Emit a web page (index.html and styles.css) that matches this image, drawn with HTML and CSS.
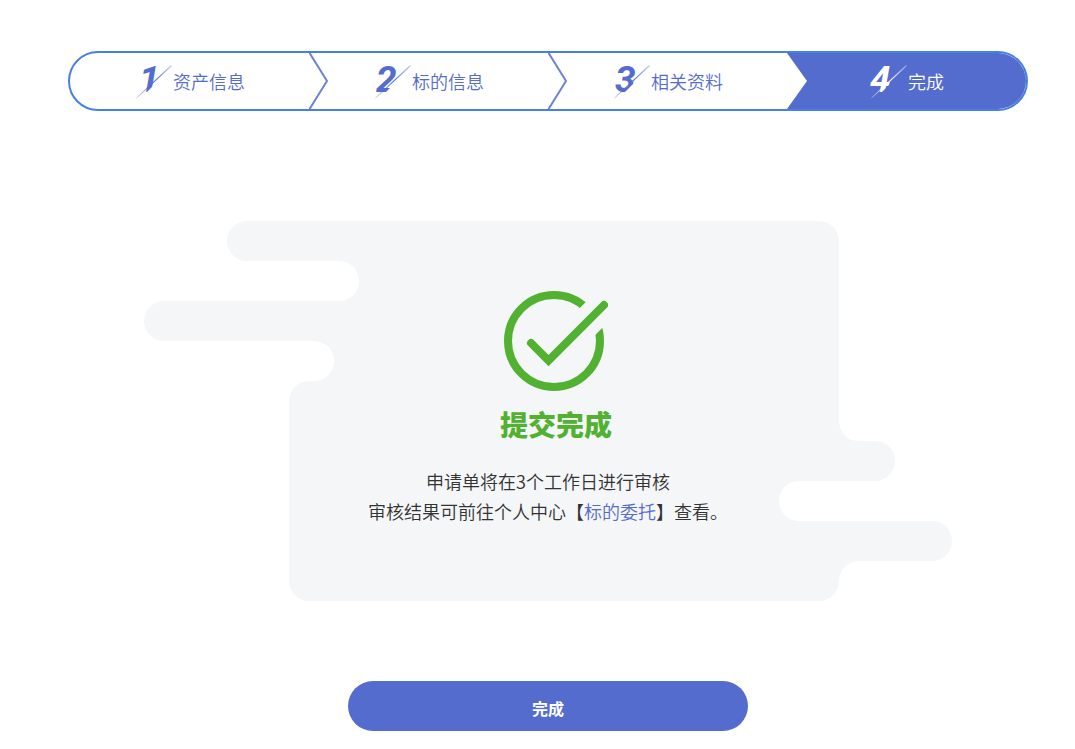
FILE: index.html
```
<!DOCTYPE html>
<html lang="zh-CN">
<head>
  <meta charset="UTF-8" />
  <meta name="viewport" content="width=device-width, initial-scale=1.0" />
  <title>提交完成</title>
  <link rel="stylesheet" href="styles.css">
</head>
<body>

  <!-- degradados compartidos por los numeros -->
  <svg class="defs" width="0" height="0" aria-hidden="true">
    <defs>
      <linearGradient id="slashBlue" x1="0" y1="1" x2="1" y2="0">
        <stop offset="0" stop-color="#546ccd" stop-opacity="0.3" />
        <stop offset="0.5" stop-color="#546ccd" />
        <stop offset="1" stop-color="#546ccd" stop-opacity="0.3" />
      </linearGradient>
      <linearGradient id="slashWhite" x1="0" y1="1" x2="1" y2="0">
        <stop offset="0" stop-color="#fff" stop-opacity="0.3" />
        <stop offset="0.5" stop-color="#fff" />
        <stop offset="1" stop-color="#fff" stop-opacity="0.3" />
      </linearGradient>
    </defs>
  </svg>

  <main class="container">
    <ol class="steps">
      <li class="step">
        <svg class="step-num" viewBox="0 0 39 36">
          <text x="5" y="29">1</text>
          <polygon class="cut" points="10,32 24,18 24,30 14,35" />
          <polygon class="slash" points="2,36 3,34 37,2 38,3" />
        </svg>
        <span>资产信息</span>
      </li>
      <li class="step">
        <svg class="arrow" viewBox="0 0 20 56"><polyline points="0,-1 18,28 0,57" /></svg>
        <svg class="step-num" viewBox="0 0 39 36">
          <text x="3" y="29">2</text>
          <polygon class="cut" points="10,32 24,18 24,30 14,35" />
          <polygon class="slash" points="2,36 3,34 37,2 38,3" />
        </svg>
        <span>标的信息</span>
      </li>
      <li class="step">
        <svg class="arrow" viewBox="0 0 20 56"><polyline points="0,-1 18,28 0,57" /></svg>
        <svg class="step-num" viewBox="0 0 39 36">
          <text x="3" y="29">3</text>
          <polygon class="cut" points="10,32 24,18 24,30 14,35" />
          <polygon class="slash" points="2,36 3,34 37,2 38,3" />
        </svg>
        <span>相关资料</span>
      </li>
      <li class="step active">
        <svg class="arrow" viewBox="0 0 20 56"><polygon points="0,0 20,28 0,56" /></svg>
        <svg class="step-num" viewBox="0 0 39 36">
          <text x="1" y="29">4</text>
          <polygon class="cut" points="10,32 24,18 24,30 14,35" />
          <polygon class="slash" points="2,36 3,34 37,2 38,3" />
        </svg>
        <span>完成</span>
      </li>
    </ol>

    <section class="result">
      <svg class="result-bg" viewBox="0 0 808 380" preserveAspectRatio="none" aria-hidden="true">
        <path d="M103 0H675a20 20 0 0 1 20 20V200a20 20 0 0 0 20 20H731a20 20 0 0 1 0 40H655a20 20 0 0 0 0 40H788a20 20 0 0 1 0 40H715a20 20 0 0 0-20 20a20 20 0 0 1-20 20H165a20 20 0 0 1-20-20V180a20 20 0 0 1 20-20H170a20 20 0 0 0 0-40H20a20 20 0 0 1 0-40H195a20 20 0 0 0 0-40H103a20 20 0 0 1 0-40z" />
      </svg>
      <div class="result-title">
        <svg class="check" viewBox="0 0 104 100" aria-hidden="true">
          <circle cx="50" cy="50" r="46" />
          <path class="gap" d="M72 42L108 6" />
          <path class="tick" d="M27 52L44.500 69.500L100 14" />
        </svg>
        <h1>提交完成</h1>
      </div>
      <p>申请单将在3个工作日进行审核<br>审核结果可前往个人中心【<a href="#">标的委托</a>】查看。</p>
    </section>

    <button type="button" class="btn">完成</button>
  </main>

</body>
</html>
```

FILE: styles.css
```
* {
  box-sizing: border-box;
}

body {
  margin: 0;
  padding: 51px 20px 18px 41px;
  background: #fff;
  color: #333;
  font-family: "Noto Sans CJK SC", sans-serif;
  font-size: 18px;
}

.defs {
  position: absolute;
}

.container {
  display: flex;
  flex-direction: column;
  align-items: center;
  max-width: 960px;
  margin: 0 auto;
}

/* pasos */
.steps {
  display: flex;
  width: 100%;
  margin: 0;
  padding: 0;
  list-style: none;
  border: 2px solid #4780e3;
  border-radius: 30px;
  overflow: hidden;
}

.step {
  position: relative;
  flex: 1;
  display: flex;
  justify-content: center;
  align-items: center;
  height: 56px;
  color: #546ccd;
  font-weight: 350;
}

.step-num {
  width: 39px;
  height: 36px;
  overflow: visible;
}

.step-num text {
  font-family: Roboto, sans-serif;
  font-size: 37px;
  font-style: italic;
  font-weight: bold;
  fill: #546ccd;
}

.cut {
  fill: #fff;
}

.slash {
  fill: url(#slashBlue);
}

.arrow {
  position: absolute;
  left: 0;
  top: 0;
  width: 20px;
  height: 56px;
}

.arrow polyline {
  fill: none;
  stroke: #6f83d4;
  stroke-width: 2;
}

.arrow polygon {
  fill: #fff;
}

.step.active {
  background: #546ccd;
  color: #fff;
}

.active .step-num text {
  fill: #fff;
}

.active .cut {
  fill: #546ccd;
}

.active .slash {
  fill: url(#slashWhite);
}

/* resultado */
.result {
  position: relative;
  width: 100%;
  max-width: 808px;
  margin-top: 110px;
  padding: 70px 0 75px;
  text-align: center;
}

.result-bg {
  position: absolute;
  left: 0;
  top: 0;
  z-index: -1;
  width: 100%;
  height: 100%;
  fill: #f4f6f8;
}

.result-title {
  padding-left: 16px;
}

.check {
  display: block;
  width: 104px;
  height: 100px;
  margin: 0 auto;
  fill: none;
  stroke: #52b130;
  stroke-width: 8;
}

.check .gap {
  stroke: #f4f6f8;
  stroke-width: 30;
}

.check .tick {
  stroke-linecap: round;
}

.result h1 {
  margin: 11px 0 20px;
  color: #52b130;
  font-size: 28px;
  font-weight: 900;
  line-height: 44px;
}

.result p {
  margin: 0;
  font-weight: 350;
  line-height: 30px;
}

.result a {
  color: #546ccd;
  text-decoration: none;
}

.btn {
  width: 100%;
  max-width: 400px;
  height: 50px;
  margin-top: 80px;
  padding-top: 4px;
  border: none;
  border-radius: 25px;
  background: #546ccd;
  color: #fff;
  font-family: inherit;
  font-size: 16px;
  font-weight: bold;
  cursor: pointer;
}
```
